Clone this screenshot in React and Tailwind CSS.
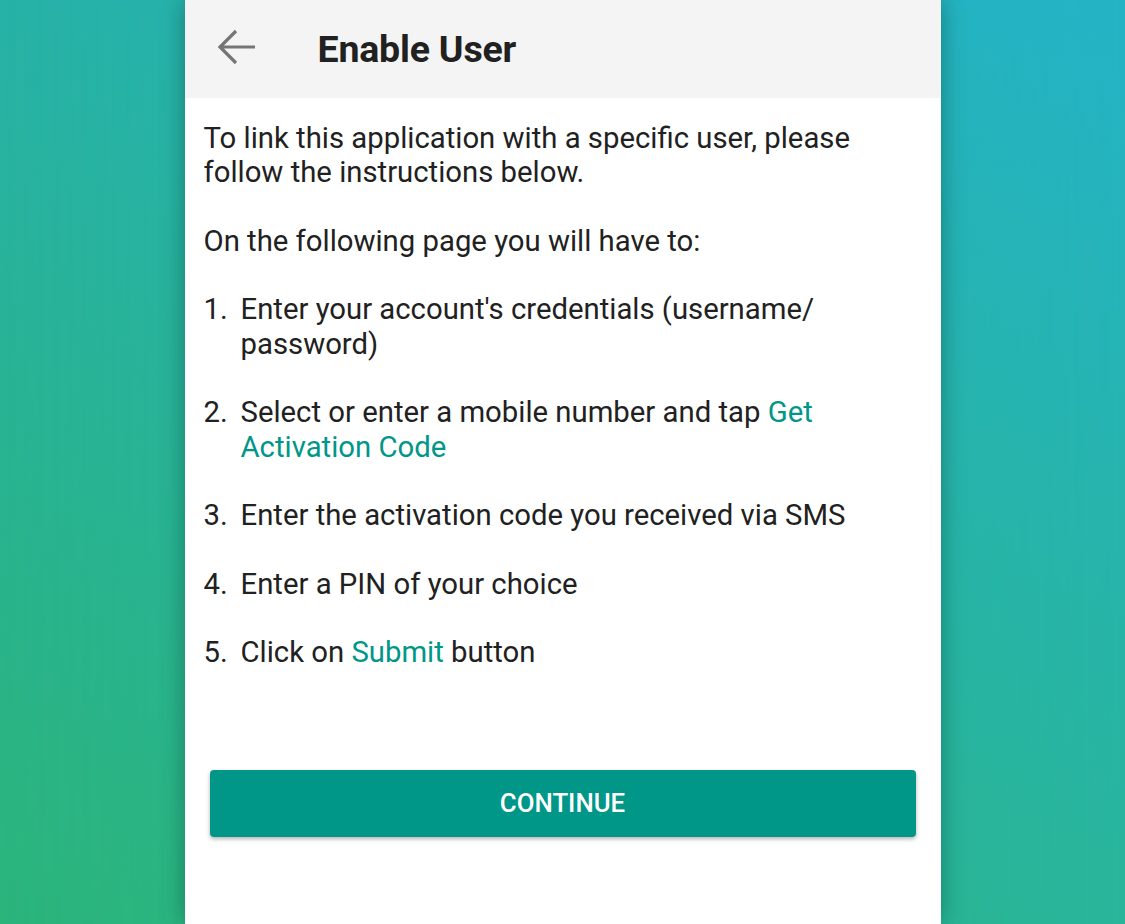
import React from "react";

const font = { fontFamily: "Roboto, 'Noto Sans', sans-serif" };

function Item({ n, children }) {
  return (
    <div className="flex">
      <span className="w-[37px] shrink-0">{n}.</span>
      <span className="flex-1">{children}</span>
    </div>
  );
}

export default function App() {
  return (
    <div
      className="w-full h-[924px] overflow-hidden flex justify-center bg-[linear-gradient(to_bottom,#27b2a7_0%,#2bb57b_100%)] relative"
      style={font}
    >
      <div className="absolute inset-0 bg-[linear-gradient(to_bottom,#24b3c6_0%,#29b59a_100%)] [mask-image:linear-gradient(to_right,transparent,black)]" />
      <div className="relative w-[756px] h-full bg-white flex flex-col shadow-[0_0_22px_rgba(0,60,50,0.45)]">
        <div className="h-[98px] bg-[#f4f4f4] flex items-center shrink-0">
          <svg width="40" height="38" viewBox="0 0 40 38" className="ml-[32px] mt-[-4px]">
            <path d="M3 19H38M19 3L3 19L19 35" fill="none" stroke="#757575" strokeWidth="3.2" />
          </svg>
          <h1 className="ml-[61px] text-[37.5px] font-bold text-[#212121] tracking-[-0.2px]">Enable User</h1>
        </div>
        <div className="pl-[19px] pr-[19px] pt-[23px] text-[29.3px] leading-[34.3px] text-[#212121] flex flex-col gap-[34.3px]">
          <p>To link this application with a specific user, please follow the instructions below.</p>
          <p>On the following page you will have to:</p>
          <Item n="1">Enter your account's credentials (username/ password)</Item>
          <Item n="2">
            Select or enter a mobile number and tap <span className="text-[#009688]">Get Activation Code</span>
          </Item>
          <Item n="3">Enter the activation code you received via SMS</Item>
          <Item n="4">Enter a PIN of your choice</Item>
          <Item n="5">
            Click on <span className="text-[#009688]">Submit</span> button
          </Item>
        </div>
        <div className="px-[25px] mt-[100px]">
          <button className="w-full h-[67px] rounded-[4px] bg-[#009688] text-white text-[25.8px] font-medium shadow-[0_2px_4px_rgba(0,0,0,0.3)]">
            CONTINUE
          </button>
        </div>
      </div>
    </div>
  );
}
